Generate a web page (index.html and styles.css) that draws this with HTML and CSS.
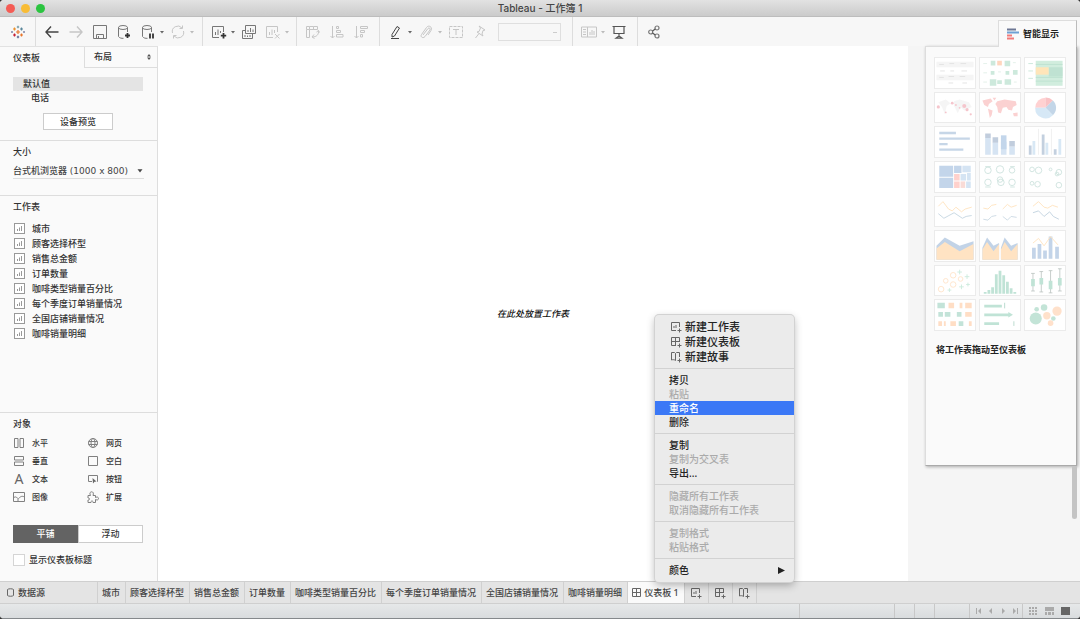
FILE: index.html
```html
<!DOCTYPE html>
<html lang="zh-CN">
<head>
<meta charset="utf-8">
<title>Tableau - 工作簿 1</title>
<link rel="stylesheet" href="styles.css">
</head>
<body>
<svg class="defs" aria-hidden="true">
  <symbol id="caret" viewBox="0 0 6 4"><path d="M1 1h4L3 3.500z" fill="currentColor"/></symbol>
  <symbol id="sheet" viewBox="0 0 11 11"><rect x=".5" y=".5" width="10" height="10" fill="#fff" stroke="#999"/><path d="M3.500 8V6M5.500 8V4.500M7.500 8V3" stroke="#999"/></symbol>
  <symbol id="add-sheet" viewBox="0 0 12 12"><path d="M6 9.500H1.500V1.500h8V6M4 7V5M6 7V4M9.500 7.500v4M7.500 9.500h4" fill="none" stroke="currentColor"/></symbol>
  <symbol id="add-dash" viewBox="0 0 12 12"><path d="M6 9.500H1.500V1.500h8V6M5.500 1.500v8M1.500 5.500h8M9.500 7.500v4M7.500 9.500h4" fill="none" stroke="currentColor"/></symbol>
  <symbol id="add-story" viewBox="0 0 12 12"><path d="M5.500 9.500V2.500M5.500 9.500c-1-1-3-1-4-.5V1.500h3l1 1 1-1h3V6M9.500 7.500v4M7.500 9.500h4" fill="none" stroke="currentColor"/></symbol>
</svg>
<div class="window">
  <header class="titlebar">
    <div class="lights"><i class="light red"></i><i class="light yellow"></i><i class="light green"></i></div>
    <h1 class="title">Tableau - 工作簿 1</h1>
  </header>

  <div class="toolbar">
    <div class="tools logo">
      <button class="tool" aria-label="开始"><svg width="14" height="14" viewBox="0 0 14 14" stroke-width="1.200"><path d="M7 5v4M5 7h4" stroke="#e8762c"/><path d="M7 .8v2.400M5.800 2h2.400" stroke="#7199a6"/><path d="M7 10.800v2.400M5.800 12h2.400" stroke="#5c6692"/><path d="M3.500 2.500v3M2 4h3" stroke="#eb912c"/><path d="M10.500 2.500v3M9 4h3" stroke="#59879b"/><path d="M3.500 8.500v3M2 10h3" stroke="#c72035"/><path d="M10.500 8.500v3M9 10h3" stroke="#e8762c"/><path d="M1 6v2M13 6v2" stroke="#5c6692"/></svg></button>
    </div>
    <div class="tools history">
      <button class="tool" aria-label="后退"><svg width="14" height="14" viewBox="0 0 14 14"><path d="M13.500 7H1M6 1.500L1 7l5 5.500" stroke="#444" stroke-width="1.400"/></svg></button>
      <button class="tool off" aria-label="前进"><svg width="14" height="14" viewBox="0 0 14 14"><path d="M.5 7H13M8 1.500L13 7l-5 5.500" stroke-width="1.400"/></svg></button>
      <button class="tool" aria-label="保存"><svg width="14" height="14" viewBox="0 0 14 14"><path d="M.5 .5h13v13h-13zM3.500 13.500v-4h7v4M5.500 11v2"/></svg></button>
      <button class="tool" aria-label="新建数据源"><svg width="14" height="14" viewBox="0 0 14 14"><ellipse cx="6" cy="2.500" rx="4.500" ry="2"/><path d="M1.500 2.500v9c1 1.500 3 2 5 1.800M10.500 2.500V7"/><path d="M10.500 8v5M8 10.500h5" stroke-width="1.800" stroke="#333"/></svg></button>
      <button class="tool" aria-label="暂停自动更新"><svg width="14" height="14" viewBox="0 0 14 14"><ellipse cx="6" cy="2.500" rx="4.500" ry="2"/><path d="M1.500 2.500v9c1 1.500 3 2 5 1.800M10.500 2.500V7"/><path d="M9 8.500v5M12 8.500v5" stroke-width="1.800" stroke="#333"/></svg></button>
      <button class="drop" aria-label="更新选项"><svg width="6" height="4"><use href="#caret"/></svg></button>
      <button class="tool off" aria-label="运行更新"><svg width="14" height="14" viewBox="0 0 14 14"><path d="M1.500 8A5.500 5.500 0 0 1 11 3M12.500 6A5.500 5.500 0 0 1 3 11M11.500 .5v3h-3M2.500 13.500v-3h3"/></svg></button>
      <button class="drop off" aria-label="运行选项"><svg width="6" height="4"><use href="#caret"/></svg></button>
    </div>
    <div class="tools sheets">
      <button class="tool" aria-label="新建工作表"><svg width="16" height="14" viewBox="0 0 16 14"><path d="M8 12.500H1.500v-11h11V7M4.500 10V7M7 10V4.500M9.500 8V6"/><path d="M12.500 8v5.500M9.800 10.700h5.400" stroke="#333" stroke-width="1.800"/></svg></button>
      <button class="drop" aria-label="新建选项"><svg width="6" height="4"><use href="#caret"/></svg></button>
      <button class="tool" aria-label="复制工作表"><svg width="16" height="14" viewBox="0 0 16 14"><path d="M4.500 .5h10v8h-10zM4.500 5.500h-3v8h10v-5M7 7V5M9.500 7V3M12 7V4.500M4 12v-2M6.500 12v-1.500M9 12v-2"/></svg></button>
      <button class="tool off" aria-label="清除工作表"><svg width="16" height="14" viewBox="0 0 16 14"><path d="M8 12.500H1.500v-11h11V7M4.500 10V7M7 10V4.500M9.500 8V5M10 9l4.500 4.500M14.500 9L10 13.500"/></svg></button>
      <button class="drop off" aria-label="清除选项"><svg width="6" height="4"><use href="#caret"/></svg></button>
    </div>
    <div class="tools order">
      <button class="tool off" aria-label="交换行和列"><svg width="14" height="14" viewBox="0 0 14 14"><path d="M.5 1.500h3v3h-3zM3.500 1.500h4v3M7.500 1.500h4v3h-8M.5 4.500v8h3v-8M12.500 5.500c.5 4-2 6.500-6 6.500M8 9.500L6 12l2.500 1.500M10.500 7l2-1.500 1 2"/></svg></button>
      <button class="tool off" aria-label="升序排序"><svg width="14" height="14" viewBox="0 0 14 14"><path d="M2.500 1v12M.5 11l2 2 2-2M6.500 1.500h2v2h-2zM6.500 5.500h4v2h-4zM6.500 9.500h6.500v2.500H6.500z"/></svg></button>
      <button class="tool off" aria-label="降序排序"><svg width="14" height="14" viewBox="0 0 14 14"><path d="M2.500 1v12M.5 11l2 2 2-2M6.500 1.500h7v2h-7zM6.500 5.500h4v2h-4zM6.500 9.500h2V12h-2z"/></svg></button>
    </div>
    <div class="tools format">
      <button class="tool" aria-label="突出显示"><svg width="14" height="14" viewBox="0 0 14 14"><path d="M3 9.500L8 1.500l2.500 1.500-5 8L3 12zM2 13.500h8" stroke="#444"/></svg></button>
      <button class="drop" aria-label="突出显示选项"><svg width="6" height="4"><use href="#caret"/></svg></button>
      <button class="tool off" aria-label="组成员"><svg width="14" height="14" viewBox="0 0 14 14"><path d="M4 10l5-6.500c1-1.300 2.800 0 2 1.500l-5 6.500c-2 2.500-5 .3-3.500-2L7.500 2.500c2-3 6.500-.5 4.500 3L9 10"/></svg></button>
      <button class="drop off" aria-label="组选项"><svg width="6" height="4"><use href="#caret"/></svg></button>
      <button class="tool off" aria-label="显示标记标签"><svg width="14" height="12" viewBox="0 0 14 12"><path d="M.5 .5h13v11H.5z" stroke-dasharray="3 1"/><path d="M4 3.500h6M7 3.500V9"/></svg></button>
      <button class="tool off" aria-label="固定轴"><svg width="12" height="14" viewBox="0 0 12 14"><path d="M5 1l6 4-2 .5L8 9l1 2-6-4 2-.5L6.500 3zM5 8.500L1.500 13"/></svg></button>
      <select class="fit" aria-label="适合" disabled><option></option></select>
    </div>
    <div class="tools view">
      <button class="tool off" aria-label="显示卡"><svg width="16" height="12" viewBox="0 0 16 12"><path d="M.5 1h15v10H.5zM6.500 1v10M2 3.500h3M2 6h3M2 8.500h3M9 9V6M11 9V4M13 9V5"/></svg></button>
      <button class="drop off" aria-label="卡选项"><svg width="6" height="4"><use href="#caret"/></svg></button>
      <button class="tool" aria-label="演示模式"><svg width="14" height="14" viewBox="0 0 14 14"><path d="M.5 1.500h13M2 1.500v7h10v-7M7 8.500V12M4 13.200h6L7 11z" stroke="#555" stroke-width="1.200"/></svg></button>
    </div>
    <div class="tools last">
      <button class="tool" aria-label="共享"><svg width="12" height="14" viewBox="0 0 12 14" stroke-width="1.200"><circle cx="2.700" cy="7" r="2"/><circle cx="9" cy="3" r="2"/><circle cx="9" cy="11" r="2"/><path d="M4.500 6L7.300 4M4.500 8l2.800 2" stroke="#555"/></svg></button>
    </div>
    <button class="showme-tab"><svg width="12" height="12" viewBox="0 0 12 12"><path d="M0 1.500h9" stroke="#6d7794" stroke-width="2"/><path d="M0 4.500h12" stroke="#6fa1d3" stroke-width="2"/><path d="M0 7.500h5M0 10.500h7" stroke="#f17b7b" stroke-width="2"/></svg>智能显示</button>
  </div>

  <main class="main">
    <aside class="side">
      <div class="side-tabs">
        <button class="side-tab current">仪表板</button>
        <button class="side-tab layout">布局<svg width="4" height="6" viewBox="0 0 4 6"><path d="M0 2.500L2 0l2 2.500zM0 3.500L2 6l2-2.500z" fill="#555"/></svg></button>
      </div>
      <section class="devices">
        <ul class="device-list"><li class="device chosen">默认值</li><li class="device child">电话</li></ul>
        <button class="preview">设备预览</button>
      </section>
      <section class="size">
        <label class="heading" for="size">大小</label>
        <div class="size-field"><select id="size" class="size-select"><option>台式机浏览器 (1000 x 800)</option></select><svg width="8" height="5" viewBox="0 0 6 4"><use href="#caret"/></svg></div>
      </section>
      <section class="worksheets">
        <h2 class="heading">工作表</h2>
        <ul class="sheet-list">
          <li><svg width="11" height="11"><use href="#sheet"/></svg>城市</li>
          <li><svg width="11" height="11"><use href="#sheet"/></svg>顾客选择杯型</li>
          <li><svg width="11" height="11"><use href="#sheet"/></svg>销售总金额</li>
          <li><svg width="11" height="11"><use href="#sheet"/></svg>订单数量</li>
          <li><svg width="11" height="11"><use href="#sheet"/></svg>咖啡类型销量百分比</li>
          <li><svg width="11" height="11"><use href="#sheet"/></svg>每个季度订单销量情况</li>
          <li><svg width="11" height="11"><use href="#sheet"/></svg>全国店铺销量情况</li>
          <li><svg width="11" height="11"><use href="#sheet"/></svg>咖啡销量明细</li>
        </ul>
      </section>
      <section class="objects">
        <h2 class="heading">对象</h2>
        <ul class="object-grid">
          <li><svg width="12" height="12" viewBox="0 0 12 12"><path d="M1.500 1.500h3.500v9H1.500zM7 1.500h3.500v9H7z"/></svg>水平</li>
          <li><svg width="12" height="12" viewBox="0 0 12 12"><circle cx="6" cy="6" r="4.500"/><ellipse cx="6" cy="6" rx="2" ry="4.500"/><path d="M1.500 4.500h9M1.500 7.500h9"/></svg>网页</li>
          <li><svg width="12" height="12" viewBox="0 0 12 12"><path d="M1.500 1.500h9v3.500h-9zM1.500 7h9v3.500h-9z"/></svg>垂直</li>
          <li><svg width="12" height="12" viewBox="0 0 12 12"><path d="M1.500 1.500h9v9h-9z"/></svg>空白</li>
          <li><span class="letter" aria-hidden="true">A</span>文本</li>
          <li><svg width="12" height="12" viewBox="0 0 12 12"><path d="M5 8.500H1.500v-6h9v6H10"/><path d="M5.500 5l4 3.500-2 .3L6 10.500z" fill="#666" stroke="none"/></svg>按钮</li>
          <li><svg width="12" height="12" viewBox="0 0 12 12"><path d="M.5 1.500h11v9H.5zM.5 7c2-3 4 1 5 .5S8 4 11.500 6M5 10.500V8"/></svg>图像</li>
          <li><svg width="12" height="12" viewBox="0 0 12 12"><path d="M1 4.500h2.500C2 2 3.500 .8 4.700 .8S7 2 6 4.500h2.500v2c2-1 3-.2 3 1s-1 2-3 1v3H6c.5-2-2.500-2-2 0H1V9c2 .5 2-2.500 0-2z"/></svg>扩展</li>
        </ul>
        <div class="modes"><button class="mode on">平铺</button><button class="mode">浮动</button></div>
        <label class="check"><input type="checkbox" class="box">显示仪表板标题</label>
      </section>
    </aside>

    <section class="canvas"><p class="hint">在此处放置工作表</p></section>

    <aside class="rail">
      <div class="showme">
        <div class="charts">
          <button class="chart" aria-label="文本表"><svg viewBox="0 0 42 32"><path d="M1 4h40v6H1zM1 18h40v6H1z" fill="#f4f4f4"/><path d="M4 7h5M15 6h5M27 6h6M5 14h5M16 14h4M28 14h6M4 21h5M14 20h6M26 20h6M14 27h5M29 27h5" stroke="#ddd"/></svg></button>
          <button class="chart" aria-label="热图"><svg viewBox="0 0 42 32"><path d="M11 3h5v5h-5zM26 3h6v6h-6zM11 14h4v4h-4zM27 14h4v4h-4zM35 13h5v5h-5zM10 23h7v7h-7zM26 23h7v6h-7zM18 24h5v4h-5z" fill="#c5e6d7"/><path d="M18 3h5v5h-5z" fill="#ffcfb3"/><path d="M3 6h4M3 16h4M3 26h4M35 5h3M19 15h3M36 26h3" stroke="#ddeee5"/></svg></button>
          <button class="chart" aria-label="突出显示表"><svg viewBox="0 0 42 32"><path d="M11 3h29v27H11z" fill="#c9ead9"/><path d="M25 10h15v10H25z" fill="#b4decb"/><path d="M11 10h14v8H11z" fill="#ffe1ad"/><path d="M11 7h29M11 21h29M11 25h29M3 6h5M3 14h5M3 22h5" stroke="#aad8c2" stroke-width=".7"/></svg></button>
          <button class="chart" aria-label="符号地图"><svg viewBox="0 0 42 32"><path d="M3 10l8-3 5 4-4 3-2 9-3-8zM20 9l6-2 10 3 3 5-8 4-4-4-3 7-4-8z" fill="#f4f4f4"/><g fill="#f4bcc4"><circle cx="3" cy="15" r="1.700"/><circle cx="18" cy="11" r="1.500"/><circle cx="31" cy="14" r="2.200"/><circle cx="34" cy="18" r="1.700"/><circle cx="22" cy="13" r="1"/><circle cx="11" cy="21" r="1"/><circle cx="38" cy="23" r="1.200"/><circle cx="26" cy="16" r="1"/></g></svg></button>
          <button class="chart" aria-label="地图"><svg viewBox="0 0 42 32"><g fill="#fbcaca"><path d="M2 8l9-2 2 3-4 3-1 3-4-2zM13 5l4 0-2 3zM8 17l5 2-1 5-2 3-1-5zM18 9l8-2 12 2 1 4-4 2-1 4-4-1-2-3-4 1-2 6-3-1-1-6-2-3zM35 22l5-1v4h-4z"/></g></svg></button>
          <button class="chart" aria-label="饼图"><svg viewBox="0 0 42 32"><path d="M21.500 16V5a11 11 0 0 0-11 11z" fill="#ffc9ca"/><path d="M21.500 16V5a11 11 0 0 1 8 3z" fill="#f8b8bb"/><path d="M21.500 16l8-8a11 11 0 0 1 0 16z" fill="#b9d0e4"/><path d="M21.500 16l8 8a11 11 0 0 1-19-8z" fill="#d0e5f5"/></svg></button>
          <button class="chart" aria-label="水平条"><svg viewBox="0 0 42 32"><path d="M4 6.500h18M4 12.500h33M4 18.500h9M4 24.500h26" stroke="#bdcfe3" stroke-width="2.500"/></svg></button>
          <button class="chart" aria-label="堆叠条"><svg viewBox="0 0 42 32"><path d="M8 12v18M16 17v13M25 16v14M34 21v9" stroke="#cfe0f1" stroke-width="6"/><path d="M8 7v5M16 11v6M34 15v6" stroke="#b7c5d8" stroke-width="6"/><path d="M25 9v15" stroke="#b9d0e8" stroke-width="6"/></svg></button>
          <button class="chart" aria-label="并排条"><svg viewBox="0 0 42 32"><path d="M14 2v28M28 2v28" stroke="#eee"/><path d="M5 20v10M19 8v22M32 24v6" stroke="#b9c8da" stroke-width="3"/><path d="M9 15v15M23 17v13M37 13v17" stroke="#d2e5f4" stroke-width="3"/></svg></button>
          <button class="chart" aria-label="树状图"><svg viewBox="0 0 42 32"><path d="M4 4h15v12H4zM4 17h15v11H4zM20 4h8v8h-8z" fill="#b9cee7"/><path d="M29 4h9v7h-9zM27 13h6v7h-6zM34 12h4v8h-4zM33 21h5v7h-5z" fill="#cee0f2"/><path d="M20 13h6v7h-6zM20 21h6v7h-6z" fill="#ffcac4"/><path d="M27 21h5v7h-5z" fill="#f9d5cf"/></svg></button>
          <button class="chart" aria-label="圆视图"><svg viewBox="0 0 42 32" fill="none" stroke="#c8e0da"><circle cx="8" cy="9" r="3.500"/><circle cx="8" cy="22" r="3.500"/><circle cx="21" cy="8" r="4"/><circle cx="21" cy="19" r="3"/><circle cx="22" cy="22" r="3.500"/><circle cx="34" cy="9" r="3"/><circle cx="34" cy="22" r="3.500"/><path d="M5 5h6M5 27h6M32 5h5M32 27h5"/></svg></button>
          <button class="chart" aria-label="并排圆"><svg viewBox="0 0 42 32" fill="none" stroke="#c8e0da"><circle cx="7" cy="8" r="2.500"/><circle cx="14" cy="9" r="3.500"/><circle cx="7" cy="23" r="2"/><circle cx="13" cy="24" r="3"/><circle cx="36" cy="11" r="3"/><circle cx="34" cy="13" r="2"/><circle cx="36" cy="25" r="3"/><circle cx="27" cy="8" r="1.500"/></svg></button>
          <button class="chart" aria-label="连续线"><svg viewBox="0 0 42 32" fill="none"><path d="M3 10l5-5 6 8 4 2 4-4 6 5 4-3 7-2" stroke="#ffe0b5"/><path d="M3 18l6 5 11-6 9 6 4-2 6-1" stroke="#bdd0de"/></svg></button>
          <button class="chart" aria-label="离散线"><svg viewBox="0 0 42 32" fill="none"><path d="M3 12l5 1 4-4 5-1M24 13l5-5 4 3 6-2" stroke="#ffe0b5"/><path d="M3 24l5 1 4-4 5-1M24 21l5 4 4-4 6 1" stroke="#c5d5e1"/></svg></button>
          <button class="chart" aria-label="双线"><svg viewBox="0 0 42 32" fill="none"><path d="M8 10l6-5 6 6 4 1 5-3 6 2" stroke="#ffe0b5"/><path d="M8 17l6-2 6 6 6-5 4 5 6 3" stroke="#b9ccdb"/></svg></button>
          <button class="chart" aria-label="连续面积图"><svg viewBox="0 0 42 32"><path d="M1 16l9-9 16 9 15-5v20H1z" fill="#b8cce3"/><path d="M1 19l9-7 16 10 15-8v17H1z" fill="#ffdfb9"/></svg></button>
          <button class="chart" aria-label="离散面积图"><svg viewBox="0 0 42 32"><path d="M2 18l5-11 7 9 6-3v18H2zM22 18l4-11 7 9 7-3v18H22z" fill="#b8cce3"/><path d="M2 20l5-8 7 10 6-8v17H2zM22 20l4-8 7 10 7-8v17H22z" fill="#ffdfb9"/></svg></button>
          <button class="chart" aria-label="双组合"><svg viewBox="0 0 42 32"><path d="M9 18v12M15 14v16M21 21v9M27 6v24M34 17v13" stroke="#b9cde5" stroke-width="4"/><path d="M8 13l6-5 6 8 7-10 8 9" stroke="#ffe0b5" fill="none"/></svg></button>
          <button class="chart" aria-label="散点图"><svg viewBox="0 0 42 32" fill="none"><g stroke="#ffe1c2"><circle cx="6" cy="25" r="3"/><circle cx="11" cy="16" r="2.500"/><circle cx="19" cy="20" r="3"/><circle cx="19" cy="10" r="3"/><circle cx="27" cy="14" r="2.500"/></g><path d="M26 4v5M23.500 6.500h5M34 9v5M31.500 11.500h5M28 20v5M25.500 22.500h5M35 18v4M33 20h4M15 24v4M13 26h4" stroke="#c5e8d8"/></svg></button>
          <button class="chart" aria-label="直方图"><svg viewBox="0 0 42 32"><path d="M5 30v-2M9 30v-4M13 30v-7M17 30V9M21 30V5M25 30V10M29 30V17M33 30v-6M37 30v-2" stroke="#b6dfcf" stroke-width="3"/></svg></button>
          <button class="chart" aria-label="盒须图"><svg viewBox="0 0 42 32"><path d="M8 8v19M6 8h4M6 27h4M17 6v22M15 6h4M15 28h4M27 5v24M25 5h4M25 29h4M37 3v24M35 3h4M35 27h4" stroke="#aab5b0" stroke-width=".8"/><path d="M8 14v8M17 13v7M27 16v9M37 13v8" stroke="#b6dfcf" stroke-width="4"/></svg></button>
          <button class="chart" aria-label="甘特图"><svg viewBox="0 0 42 32"><path d="M2 3h8v6H2zM3 13h5v5H3zM10 13h6v5h-6zM23 13h5v5h-5zM25 23h5v5h-5z" fill="#b9dfd2"/><path d="M14 3h6v6h-6zM26 3h3v6h-3zM32 3h7v6h-7zM32 13h7v5h-7zM3 23h4v5H3zM9 23h2v5H9zM16 23h6v5h-6zM36 23h3v5h-3z" fill="#ffd9bc"/></svg></button>
          <button class="chart" aria-label="靶心图"><svg viewBox="0 0 42 32"><path d="M4 6.500h19M4 16h27M4 25.500h16" stroke="#b6dfcf" stroke-width="3"/><path d="M26 3v6M36 23v5" stroke="#acd4c6"/><path d="M30 13l5 3-5 3z" fill="#b6dfcf"/></svg></button>
          <button class="chart" aria-label="填充气泡图"><svg viewBox="0 0 42 32"><g fill="#b9e0d1"><circle cx="11" cy="20" r="6.500"/><circle cx="20" cy="8" r="3.500"/><circle cx="12" cy="10" r="2.500"/><circle cx="30" cy="20" r="2.500"/></g><g fill="#ffdcc2"><circle cx="23" cy="17" r="4"/><circle cx="34" cy="12" r="5"/><circle cx="27" cy="25" r="3"/></g></svg></button>
        </div>
        <p class="showme-note">将工作表拖动至仪表板</p>
      </div>
      <div class="thumb"></div>
    </aside>
  </main>

  <nav class="tabs" aria-label="工作表标签">
    <button class="tab source"><svg width="7" height="9" viewBox="0 0 7 9"><path d="M.5 1.500c1-1 5-1 6 0v6c-1 1-5 1-6 0z"/></svg>数据源</button>
    <button class="tab">城市</button>
    <button class="tab">顾客选择杯型</button>
    <button class="tab">销售总金额</button>
    <button class="tab">订单数量</button>
    <button class="tab">咖啡类型销量百分比</button>
    <button class="tab">每个季度订单销量情况</button>
    <button class="tab">全国店铺销量情况</button>
    <button class="tab">咖啡销量明细</button>
    <button class="tab active"><svg width="9" height="9" viewBox="0 0 9 9"><path d="M.5 .5h8v8h-8zM4.500 .5v8M.5 4.500h8"/></svg>仪表板 1</button>
    <button class="tab new" aria-label="新建工作表"><svg width="12" height="12"><use href="#add-sheet"/></svg></button>
    <button class="tab new" aria-label="新建仪表板"><svg width="12" height="12"><use href="#add-dash"/></svg></button>
    <button class="tab new" aria-label="新建故事"><svg width="12" height="12"><use href="#add-story"/></svg></button>
  </nav>

  <footer class="status">
    <span class="cell wide"></span><span class="cell small"></span><span class="cell small"></span><span class="cell medium"></span>
    <div class="cell pager">
      <button aria-label="第一个"><svg width="6" height="6" viewBox="0 0 6 6"><path d="M0 0h1v6H0zM5 0v6L2 3z"/></svg></button>
      <button aria-label="上一个"><svg width="6" height="6" viewBox="0 0 6 6"><path d="M4 0v6L1 3z"/></svg></button>
      <button aria-label="下一个"><svg width="6" height="6" viewBox="0 0 6 6"><path d="M2 0v6l3-3z"/></svg></button>
      <button aria-label="最后一个"><svg width="6" height="6" viewBox="0 0 6 6"><path d="M5 0h1v6H5zM1 0v6l3-3z"/></svg></button>
    </div>
    <div class="cell modes-view">
      <button aria-label="工作表排序"><svg width="9" height="8" viewBox="0 0 9 8"><path d="M0 0h2v2H0zM3 0h2v2H3zM6 0h2v2H6zM0 3h2v2H0zM3 3h2v2H3zM6 3h2v2H6zM0 6h2v2H0zM3 6h2v2H3zM6 6h2v2H6z" fill="#aaa"/></svg></button>
      <button aria-label="显示缩略图"><svg width="9" height="8" viewBox="0 0 9 8"><path d="M0 0h9v4H0z" fill="#aaa"/><path d="M0 5h2v3H0zM3 5h3v3H3zM7 5h2v3H7z" fill="#aaa"/></svg></button>
      <button aria-label="显示标签"><svg width="9" height="8" viewBox="0 0 9 8"><path d="M0 0h9v8H0z" fill="#666"/></svg></button>
    </div>
  </footer>
</div>

<div class="menu" role="menu">
  <button class="item create" role="menuitem"><svg width="12" height="12"><use href="#add-sheet"/></svg>新建工作表</button>
  <button class="item create" role="menuitem"><svg width="12" height="12"><use href="#add-dash"/></svg>新建仪表板</button>
  <button class="item create" role="menuitem"><svg width="12" height="12"><use href="#add-story"/></svg>新建故事</button>
  <hr class="rule">
  <button class="item" role="menuitem">拷贝</button>
  <button class="item" role="menuitem" disabled>粘贴</button>
  <button class="item hover" role="menuitem">重命名</button>
  <button class="item" role="menuitem">删除</button>
  <hr class="rule">
  <button class="item" role="menuitem">复制</button>
  <button class="item" role="menuitem" disabled>复制为交叉表</button>
  <button class="item" role="menuitem">导出...</button>
  <hr class="rule">
  <button class="item" role="menuitem" disabled>隐藏所有工作表</button>
  <button class="item" role="menuitem" disabled>取消隐藏所有工作表</button>
  <hr class="rule">
  <button class="item" role="menuitem" disabled>复制格式</button>
  <button class="item" role="menuitem" disabled>粘贴格式</button>
  <hr class="rule">
  <button class="item more" role="menuitem">颜色<svg width="7" height="7" viewBox="0 0 7 7"><path d="M0 0l7 3.500L0 7z" fill="#222"/></svg></button>
</div>
</body>
</html>
```

FILE: styles.css
```css
* { box-sizing: border-box; }
body { margin: 0; background: #333; color: #333; font: 500 9px/12px "Noto Sans", "Noto Sans CJK SC", sans-serif; }
button, select, input { margin: 0; padding: 0; border: 0; background: none; color: inherit; font: inherit; border-radius: 0; appearance: none; }
h1, h2, p, ul { margin: 0; padding: 0; font: inherit; list-style: none; }
svg { display: block; flex: none; }
.defs { position: absolute; width: 0; height: 0; }

.window { display: flex; flex-direction: column; height: 100vh; border-radius: 4px; overflow: hidden; background: #f5f5f5; border-bottom: 1px solid #85898c; }

/* Title bar */
.titlebar { display: grid; grid-template-columns: 1fr auto 1fr; align-items: center; height: 17px; background: linear-gradient(#e2e2e2, #cbcbcb); border-bottom: 1px solid #bdbdbd; }
.lights { display: flex; gap: 6px; padding-left: 6px; }
.light { width: 9px; height: 9px; border-radius: 50%; }
.red { background: #f45c55; }
.yellow { background: #f8bc35; }
.green { background: #2bc440; }
.title { font: 500 10px/16px Inter, "Noto Sans CJK SC", sans-serif; color: #444; }

/* Toolbar */
.toolbar { display: flex; height: 29px; background: #f7f7f7; }
.tools { display: flex; align-items: center; padding-left: 3px; border-right: 1px solid #ddd; }
.tool { display: flex; align-items: center; justify-content: center; width: 22px; height: 22px; margin-left: 2px; }
.tool svg { fill: none; stroke: #777; }
.tool.off svg { stroke: #c6c6c6; }
.drop { width: 6px; color: #666; }
.drop.off { color: #bbb; }
.logo { width: 36px; padding-left: 5px; }
.history { width: 167px; }
.sheets { width: 94px; }
.order { width: 83px; }
.format { width: 193px; }
.view { width: 65px; }
.last { width: 33px; border: 0; }
.fit { width: 63px; height: 18px; margin-left: 7px; border: 1px solid #d5d5d5; background: linear-gradient(#bbb, #bbb) 54px 8px / 4px 1px no-repeat; }
.showme-tab { position: relative; z-index: 1; display: flex; align-items: center; gap: 4px; width: 79px; height: 27px; margin: 3px 3px 0 auto; padding-left: 8px; background: #fafafa; border: 1px solid #ddd; border-bottom: 0; border-right-color: #bbb; font-weight: 700; color: #222; }

/* Main area */
.main { display: flex; flex: 1; min-height: 0; }
.side { display: flex; flex-direction: column; width: 158px; background: #fafafa; border-right: 1px solid #dedede; border-top: 1px solid #e2e2e2; }
.side-tabs { display: flex; height: 21px; }
.side-tab { padding: 0 13px; text-align: left; }
.side-tab.current { width: 84px; }
.layout { display: flex; flex: 1; align-items: center; justify-content: space-between; padding: 0 6px 0 9px; border-left: 1px solid #ddd; border-bottom: 1px solid #ddd; }
.heading { display: block; font-size: 9px; line-height: 12px; }
.devices { padding: 9px 14px 10px 13px; border-bottom: 1px solid #ddd; }
.device { height: 14px; padding-left: 10px; line-height: 14px; }
.chosen { background: #e4e4e4; }
.child { padding-left: 18px; }
.preview { display: block; width: 70px; height: 17px; margin: 8px auto 0; background: #fff; border: 1px solid #ccc; }
.size { height: 55px; padding: 5px 13px 0; border-bottom: 1px solid #ddd; }
.size-field { display: flex; align-items: center; height: 16px; margin-top: 5px; border-bottom: 1px solid #ddd; color: #444; }
.size-select { flex: 1; font-family: "DejaVu Sans", "Noto Sans CJK SC", sans-serif; }
.worksheets { flex: 1; padding: 5px 13px; }
.sheet-list { margin-top: 8px; }
.sheet-list li { display: flex; align-items: center; gap: 7px; height: 15px; padding-left: 1px; }
.objects { padding: 5px 14px 15px 13px; border-top: 1px solid #ddd; }
.object-grid { display: grid; grid-template-columns: 74px 1fr; margin-top: 4px; font-size: 8px; }
.object-grid li { display: flex; align-items: center; gap: 7px; height: 18px; }
.object-grid svg { fill: none; stroke: #808080; }
.letter { width: 12px; text-align: center; font: 14px/18px "Noto Sans", sans-serif; color: #666; }
.modes { display: flex; height: 18px; margin-top: 19px; }
.mode { flex: 1; background: #fff; border: 1px solid #ccc; }
.mode.on { background: #636363; border-color: #636363; color: #fff; }
.check { display: flex; align-items: center; gap: 4px; height: 12px; margin-top: 11px; }
.box { width: 12px; height: 12px; background: #fff; border: 1px solid #d5d5d5; }
.canvas { display: flex; flex: 1; align-items: center; justify-content: center; background: #fff; }
.hint { font-style: italic; color: #111; }

/* Show Me */
.rail { display: flex; flex-direction: column; width: 172px; padding: 0 3px 0 17px; background: #f5f5f5; }
.showme { height: 420px; padding: 10px 10px 0 8px; background: #fafafa; border: 1px solid #ddd; border-right-color: #aaa; border-bottom-color: #aaa; box-shadow: 1px 1px 3px rgb(0 0 0 / 30%); }
.charts { display: grid; grid-template-columns: repeat(3, 1fr); grid-auto-rows: 1fr; gap: 3px; height: 274px; }
.chart { min-height: 0; background: #fff; border: 1px solid #ebebeb; }
.chart svg { width: 100%; height: 100%; opacity: .85; }
.showme-note { margin-top: 13px; padding-left: 2px; font-weight: 700; color: #222; }
.thumb { width: 5px; height: 53px; margin-left: auto; background: #c4c4c4; border-radius: 0 0 3px 3px; }

/* Sheet tabs */
.tabs { display: flex; height: 22px; background: #e4e4e4; border-top: 1px solid #cfcfcf; }
.tab { display: flex; align-items: center; gap: 3px; padding: 0 5px 0 4px; border-right: 1px solid #d0d0d0; white-space: nowrap; color: #444; }
.tab svg { fill: none; stroke: #666; color: #666; }
.source { width: 98px; padding-left: 7px; gap: 4px; }
.active { background: #fafafa; }
.new { width: 24px; padding: 0 5px; }

/* Status bar */
.status { display: flex; justify-content: flex-end; height: 15px; background: linear-gradient(#e6e8e9, #d9dcde); border-top: 1px solid #cfcfcf; }
.cell { border-left: 1px solid #c8c8c8; }
.wide { width: 95px; }
.small { width: 20px; }
.medium { width: 35px; }
.pager { display: flex; align-items: center; gap: 6px; width: 53px; padding-left: 6px; fill: #aaa; }
.modes-view { display: flex; align-items: center; gap: 7px; width: 58px; padding-left: 6px; }

/* Context menu */
.menu { position: absolute; left: 655px; top: 315px; width: 139px; padding: 4px 0 5px; background: #ebebeb; border-radius: 4px; box-shadow: 0 0 0 1px #d2d2d2, 0 3px 9px rgb(0 0 0 / 30%); color: #222; font-size: 10px; }
.item { display: flex; align-items: center; width: 100%; height: 14px; padding: 0 9px 0 14px; line-height: 14px; }
.item:disabled { color: #aaa; }
.create { gap: 3px; height: 15px; padding-left: 15px; font-size: 11px; }
.create svg { color: #666; }
.hover { background: #3b78f6; color: #fff; }
.more { justify-content: space-between; }
.rule { height: 1px; margin: 4px 0; border: 0; background: #d2d2d2; }
```
